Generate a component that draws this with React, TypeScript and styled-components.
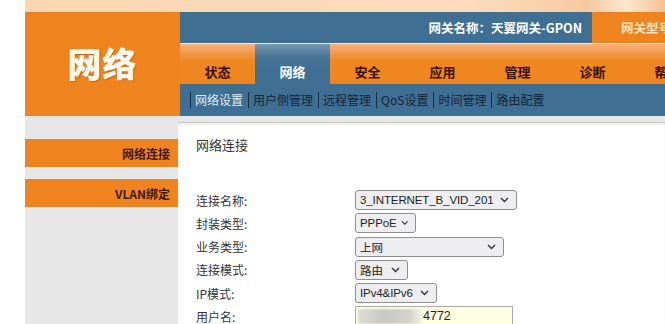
import React from 'react'
import styled, {createGlobalStyle} from 'styled-components'

const GlobalStyle = createGlobalStyle`
  html, body {
    margin: 0;
    padding: 0;
    background: #ffffff;
    overflow: hidden;
  }
  body {
    font-family: "Noto Sans CJK SC", "Liberation Sans", sans-serif;
  }
`

const tabs = ['状态', '网络', '安全', '应用', '管理', '诊断', '帮助']
const subItems = ['网络设置', '用户侧管理', '远程管理', 'QoS设置', '时间管理', '路由配置']

const fields = [
  {label: '连接名称:', value: '3_INTERNET_B_VID_201', width: 162},
  {label: '封装类型:', value: 'PPPoE', width: 61},
  {label: '业务类型:', value: '上网', width: 149},
  {label: '连接模式:', value: '路由', width: 53},
  {label: 'IP模式:', value: 'IPv4&IPv6', width: 82},
]

function Chevron() {
  return (
    <svg width="9" height="6" viewBox="0 0 9 6">
      <path d="M1 1 L4.5 4.5 L8 1" fill="none" stroke="#333" strokeWidth="1.4" />
    </svg>
  )
}

export default function App() {
  return (
    <>
      <GlobalStyle />
      <Page>
        <TopStrip />
        <Header>
          <Logo>网络</Logo>
          <HeaderRight>
            <InfoBar>
              <GatewayName>网关名称：天翼网关-GPON</GatewayName>
              <ModelBox>网关型号：</ModelBox>
            </InfoBar>
            <TabBar>
              {tabs.map((t) => (
                <Tab key={t} $active={t === '网络'}>
                  {t}
                </Tab>
              ))}
            </TabBar>
            <SubMenu>
              {subItems.map((s, i) => (
                <SubItem key={s} $active={i === 0}>
                  {s}
                </SubItem>
              ))}
            </SubMenu>
          </HeaderRight>
        </Header>
        <Body>
          <Sidebar>
            <SideItem>网络连接</SideItem>
            <SideItem>VLAN绑定</SideItem>
          </Sidebar>
          <Content>
            <Title>网络连接</Title>
            <Form>
              {fields.map((f) => (
                <React.Fragment key={f.label}>
                  <Label>{f.label}</Label>
                  <Cell>
                    <Select $w={f.width}>
                      <span>{f.value}</span>
                      <Chevron />
                    </Select>
                  </Cell>
                </React.Fragment>
              ))}
              <Label>用户名:</Label>
              <Cell>
                <TextInput>
                  <Blur />
                  <span>4772</span>
                </TextInput>
              </Cell>
            </Form>
          </Content>
        </Body>
      </Page>
    </>
  )
}

const Page = styled.div`
  margin-left: 25px;
  width: 640px;
  height: 324px;
  overflow: hidden;
  display: flex;
  flex-direction: column;
`

const TopStrip = styled.div`
  height: 12px;
  flex-shrink: 0;
  background: linear-gradient(90deg, #fbd6b2 0%, #fcdcbd 70%, #f6c9a0 88%, #fde7cf 94%, #f3c196 100%);
`

const Header = styled.div`
  display: flex;
  height: 104px;
  flex-shrink: 0;
`

const Logo = styled.div`
  width: 155px;
  background: #ef841e;
  color: #fff8ee;
  font-size: 34px;
  font-weight: 900;
  display: flex;
  align-items: center;
  justify-content: center;
  padding-bottom: 4px;
  box-sizing: border-box;
  text-shadow: 1px 1px 1px rgba(120, 50, 0, 0.35);
  letter-spacing: 1px;
`

const HeaderRight = styled.div`
  flex: 1;
  display: flex;
  flex-direction: column;
  min-width: 0;
`

const InfoBar = styled.div`
  height: 31px;
  background: #3f6f92;
  display: flex;
  align-items: center;
  justify-content: flex-end;
  white-space: nowrap;
`

const GatewayName = styled.div`
  color: #ffffff;
  font-size: 12.5px;
  font-weight: 700;
  margin-right: 10px;
`

const ModelBox = styled.div`
  width: 73px;
  height: 100%;
  box-sizing: border-box;
  background: #ef841e;
  color: #fde3c6;
  font-size: 12.5px;
  font-weight: 700;
  display: flex;
  align-items: center;
  padding-left: 29px;
  overflow: hidden;
  flex-shrink: 0;
`

const TabBar = styled.div`
  height: 40px;
  display: flex;
  border-top: 1px solid #f4e6dc;
  background: linear-gradient(180deg, #f6b27a 0%, #f29645 25%, #ef861f 45%, #ef861f 100%);
  white-space: nowrap;
`

const Tab = styled.div<{$active?: boolean}>`
  width: 75px;
  flex-shrink: 0;
  display: flex;
  align-items: flex-end;
  justify-content: center;
  padding-bottom: 3px;
  box-sizing: border-box;
  font-size: 13px;
  font-weight: 700;
  color: ${(p) => (p.$active ? '#ffffff' : '#3a1200')};
  background: ${(p) =>
    p.$active ? 'linear-gradient(180deg, #7799b3 0%, #4b7799 30%, #3f6f92 60%)' : 'transparent'};
`

const SubMenu = styled.div`
  height: 32px;
  background: #3f6f92;
  display: flex;
  align-items: center;
  padding-left: 10px;
  white-space: nowrap;
`

const SubItem = styled.div<{$active?: boolean}>`
  font-size: 12px;
  line-height: 16px;
  padding: 0 5px 0 4px;
  border-left: 1px solid #1a2e44;
  color: ${(p) => (p.$active ? '#dfeaf3' : '#15263a')};
`

const Body = styled.div`
  flex: 1;
  display: flex;
  background: #e7e7e7;
  padding-top: 6px;
`

const Sidebar = styled.div`
  width: 153px;
  flex-shrink: 0;
  display: flex;
  flex-direction: column;
  gap: 12px;
  padding-top: 17px;
`

const SideItem = styled.div`
  height: 28px;
  background: #ef841e;
  margin-right: -2px;
  display: flex;
  align-items: center;
  justify-content: flex-end;
  padding-right: 10px;
  font-size: 12px;
  font-weight: 700;
  color: #3e1a06;
`

const Content = styled.div`
  flex: 1;
  background: #ffffff;
  border-top: 1px solid #c9c9c9;
  box-shadow: inset 0 2px 2px rgba(0, 0, 0, 0.08);
  padding: 12px 0 0 18px;
`

const Title = styled.div`
  font-size: 13px;
  color: #333333;
  line-height: 20px;
`

const Form = styled.div`
  display: grid;
  grid-template-columns: 159px 1fr;
  grid-auto-rows: 20px;
  row-gap: 3.3px;
  margin-top: 35px;
`

const Label = styled.div`
  font-size: 12px;
  color: #333333;
  display: flex;
  align-items: center;
`

const Cell = styled.div`
  display: flex;
  align-items: center;
`

const Select = styled.div<{$w: number}>`
  width: ${(p) => p.$w}px;
  height: 20px;
  box-sizing: border-box;
  border: 1px solid #8e8e8e;
  border-radius: 3px;
  background: #eeeef1;
  display: flex;
  align-items: center;
  justify-content: space-between;
  gap: 4px;
  padding: 0 7px 0 4px;
  font-family: "Liberation Sans", "Noto Sans CJK SC", sans-serif;
  font-size: 11.5px;
  letter-spacing: -0.1px;
  color: #222222;
  white-space: nowrap;
`

const TextInput = styled.div`
  width: 158px;
  height: 20px;
  box-sizing: border-box;
  border: 1px solid #a9a9a9;
  background: #ffffe2;
  display: flex;
  align-items: center;
  padding-left: 2px;
  font-family: "Liberation Sans", sans-serif;
  font-size: 12.5px;
  color: #222222;
`

const Blur = styled.div`
  width: 64px;
  height: 15px;
  margin-right: 1px;
  background: linear-gradient(90deg, #dcdcd6 0%, #c9c9c4 40%, #d2d2cc 80%, #f5f5e4 100%);
  filter: blur(1px);
`
